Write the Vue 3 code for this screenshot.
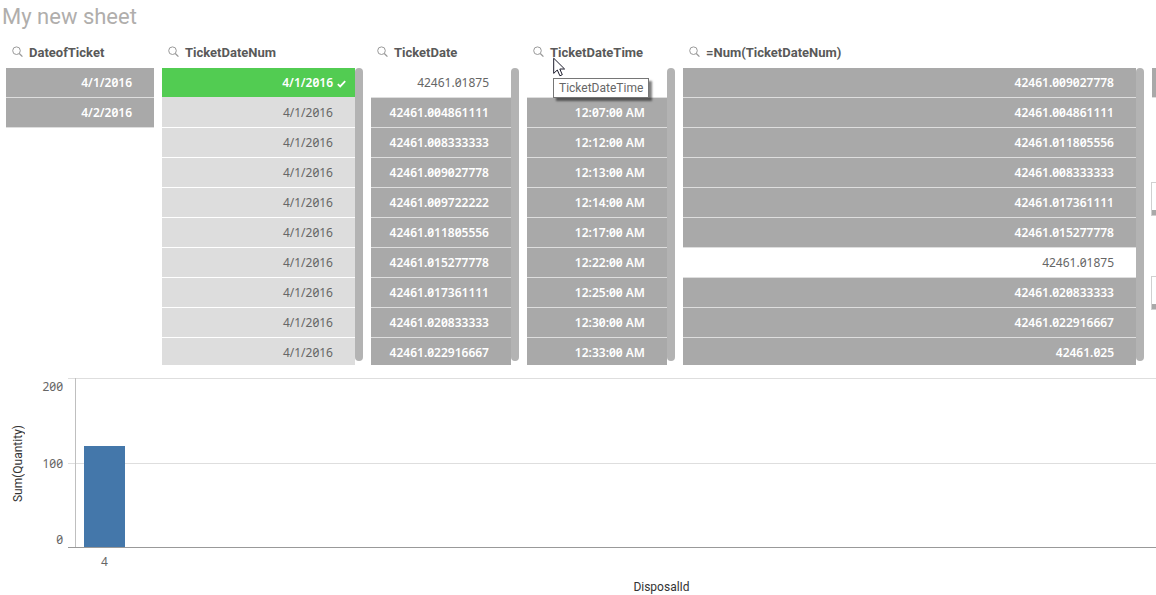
<script setup>
const same = (n, value, state) => Array.from({ length: n }, () => ({ value, state }))
const rows = (values, possible) => values.map((value) => ({ value, state: value === possible ? 'possible' : 'excluded' }))

const lists = [
  { title: 'DateofTicket', scroll: false, items: rows(['4/1/2016', '4/2/2016']) },
  {
    title: 'TicketDateNum',
    scroll: true,
    items: [{ value: '4/1/2016', state: 'selected' }, ...same(9, '4/1/2016', 'alternative')],
  },
  {
    title: 'TicketDate',
    scroll: true,
    items: rows(
      ['42461.01875', '42461.004861111', '42461.008333333', '42461.009027778', '42461.009722222', '42461.011805556',
        '42461.015277778', '42461.017361111', '42461.020833333', '42461.022916667'],
      '42461.01875',
    ),
  },
  {
    title: 'TicketDateTime',
    scroll: true,
    tooltip: true,
    items: rows(
      ['', '12:07:00 AM', '12:12:00 AM', '12:13:00 AM', '12:14:00 AM', '12:17:00 AM', '12:22:00 AM', '12:25:00 AM',
        '12:30:00 AM', '12:33:00 AM'],
      '',
    ),
  },
  {
    title: '=Num(TicketDateNum)',
    scroll: true,
    items: rows(
      ['42461.009027778', '42461.004861111', '42461.011805556', '42461.008333333', '42461.017361111',
        '42461.015277778', '42461.01875', '42461.020833333', '42461.022916667', '42461.025'],
      '42461.01875',
    ),
  },
]

const axisMax = 200
const ticks = [200, 100, 0]
const bars = [{ id: '4', quantity: 119 }]
</script>

<template>
  <main class="sheet">
    <h1 class="sheet-title">My new sheet</h1>

    <div class="filters">
      <section v-for="list in lists" :key="list.title" class="filter">
        <header class="filter-head">
          <button type="button" class="search" :aria-label="'Search ' + list.title">
            <svg width="12" height="12" viewBox="0 0 12 12" fill="none" stroke="#999">
              <circle cx="4.5" cy="4.7" r="3.8" />
              <path d="M7.3 7.5L10.4 10.6" stroke-width="1.3" />
            </svg>
          </button>
          <h2>{{ list.title }}</h2>
          <div v-if="list.tooltip" class="tooltip" role="tooltip">TicketDateTime</div>
          <svg v-if="list.tooltip" class="pointer" width="13" height="20" viewBox="0 0 13 20">
            <path
              d="M.7 1.2V16.4L4.3 13L6.9 18.8L9.3 17.7L6.8 12H11.6Z"
              fill="#fff"
              stroke="#1c1c2c"
            />
          </svg>
        </header>
        <div class="filter-body">
          <ul class="rows">
            <li v-for="(item, i) in list.items" :key="i">
              <button type="button" class="row" :class="item.state" :aria-label="item.value || 'Value'">
                <span>{{ item.value }}</span>
                <svg v-if="item.state === 'selected'" class="tick" width="9" height="8" viewBox="0 0 9 8">
                  <path d="M.8 4.2L3.2 6.4L8.2 1.2" fill="none" stroke="#fff" stroke-width="1.8" />
                </svg>
              </button>
            </li>
          </ul>
          <div v-if="list.scroll" class="scrollbar"></div>
        </div>
      </section>
      <div class="next-column">
        <div class="stub"></div>
        <div class="stub-box"></div>
        <div class="stub-box"></div>
      </div>
    </div>

    <section class="chart" aria-label="Sum(Quantity) by DisposalId">
      <div class="y-title"><span>Sum(Quantity)</span></div>
      <div class="y-labels">
        <span v-for="t in ticks" :key="t">{{ t }}</span>
      </div>
      <div class="plot">
        <div class="band"></div>
        <div class="band"></div>
        <div class="bars">
          <div v-for="b in bars" :key="b.id" class="bar" :style="{ height: (b.quantity / axisMax) * 100 + '%' }"></div>
        </div>
      </div>
      <div class="x-axis">
        <div class="x-labels"><span v-for="b in bars" :key="b.id">{{ b.id }}</span></div>
        <div class="x-title">DisposalId</div>
      </div>
    </section>
  </main>
</template>

<style>
body {
  margin: 0;
  background: #fff;
}
</style>

<style scoped>
.sheet {
  display: flex;
  flex-direction: column;
  min-height: 100vh;
  overflow: hidden;
  box-sizing: border-box;
  font-family: "Noto Sans", "Open Sans", sans-serif;
  font-size: 12px;
  font-feature-settings: "zero", "tnum";
  color: #666;
}
.sheet-title {
  margin: 0;
  padding-left: 2px;
  height: 36px;
  line-height: 34px;
  font-family: Roboto, sans-serif;
  font-size: 22px;
  font-weight: 400;
  color: #b0aeac;
}
.filters {
  display: grid;
  grid-template-columns: 148fr 201fr 148fr 148fr 461fr 4px;
  column-gap: 8px;
  padding-left: 6px;
}
.filter {
  min-width: 0;
}
.filter-head {
  position: relative;
  display: flex;
  align-items: center;
  height: 32px;
  padding-left: 6px;
  gap: 5px;
}
.filter-head h2 {
  margin: 0;
  font-family: Roboto, sans-serif;
  font-size: 13px;
  font-weight: 700;
  white-space: nowrap;
  color: #595959;
}
.search {
  display: flex;
  padding: 0;
  border: 0;
  background: none;
}
.filter-body {
  display: flex;
  align-items: flex-start;
}
.rows {
  flex: 1;
  min-width: 0;
  max-height: 297px;
  margin: 0;
  padding: 0;
  overflow: hidden;
  list-style: none;
}
.row {
  position: relative;
  display: block;
  width: 100%;
  height: 30px;
  padding: 0 22px 0 0;
  border: 0;
  border-bottom: 1px solid #dedede;
  font: inherit;
  font-feature-settings: inherit;
  text-align: right;
}
.excluded {
  background: #a9a9a9;
  color: #fff;
  font-weight: 600;
}
.alternative {
  background: #ddd;
  border-color: #fff;
  color: #666;
}
.possible {
  background: #fff;
  color: #666;
}
.selected {
  background: #52cc52;
  color: #fff;
  font-weight: 600;
}
.tick {
  position: absolute;
  right: 9px;
  top: 12px;
}
.scrollbar {
  width: 8px;
  height: 293px;
  border-radius: 4px;
  background: #b3b3b3;
}
.tooltip {
  position: absolute;
  left: 26px;
  top: 42px;
  z-index: 1;
  padding: 0 5px;
  border: 1px solid #767676;
  background: #fff;
  box-shadow: 3px 3px 2px rgba(0, 0, 0, 0.5);
  font-family: Roboto, sans-serif;
  line-height: 18px;
  white-space: nowrap;
}
.pointer {
  position: absolute;
  left: 26px;
  top: 21px;
  z-index: 2;
}
.next-column {
  padding-top: 32px;
}
.stub {
  height: 29px;
  background: #a9a9a9;
  border-bottom: 1px solid #dedede;
}
.stub-box {
  box-sizing: border-box;
  height: 34px;
  margin-top: 84px;
  margin-left: -1px;
  border: 1px solid #d0d0d0;
  border-right: 0;
  background: linear-gradient(#fff 27px, #a9a9a9 27px);
}
.stub-box + .stub-box {
  margin-top: 60px;
}
.chart {
  flex: 1;
  display: grid;
  grid-template-columns: 36px 27px 1fr;
  grid-template-rows: minmax(170px, 1fr) 47px;
  column-gap: 0;
  margin-top: 13px;
}
.y-title {
  display: flex;
  align-items: center;
  justify-content: center;
  padding-top: 2px;
  color: #333;
}
.y-title span {
  writing-mode: vertical-rl;
  transform: rotate(180deg);
  white-space: nowrap;
  font-family: Roboto, sans-serif;
}
.y-labels {
  display: flex;
  flex-direction: column;
  justify-content: space-between;
  padding-top: 1px;
  text-align: right;
  line-height: 16px;
}
.plot {
  position: relative;
  display: flex;
  flex-direction: column;
  margin-left: 5px;
  border-bottom: 1px solid #999;
}
.band {
  flex: 1;
  border-top: 1px solid #dedede;
}
.bars {
  position: absolute;
  inset: 0 0 0 7px;
  display: flex;
  align-items: flex-end;
  padding-left: 8px;
  border-left: 1px solid #bfbfbf;
}
.bar {
  width: 41px;
  background: #4477aa;
}
.x-axis {
  grid-column: 1 / -1;
}
.x-labels {
  padding-left: 84px;
  height: 28px;
  line-height: 28px;
}
.x-labels span {
  display: block;
  width: 41px;
  text-align: center;
}
.x-title {
  padding-left: 167px;
  text-align: center;
  line-height: 22px;
  height: 19px;
  font-family: Roboto, sans-serif;
  color: #333;
}
</style>
